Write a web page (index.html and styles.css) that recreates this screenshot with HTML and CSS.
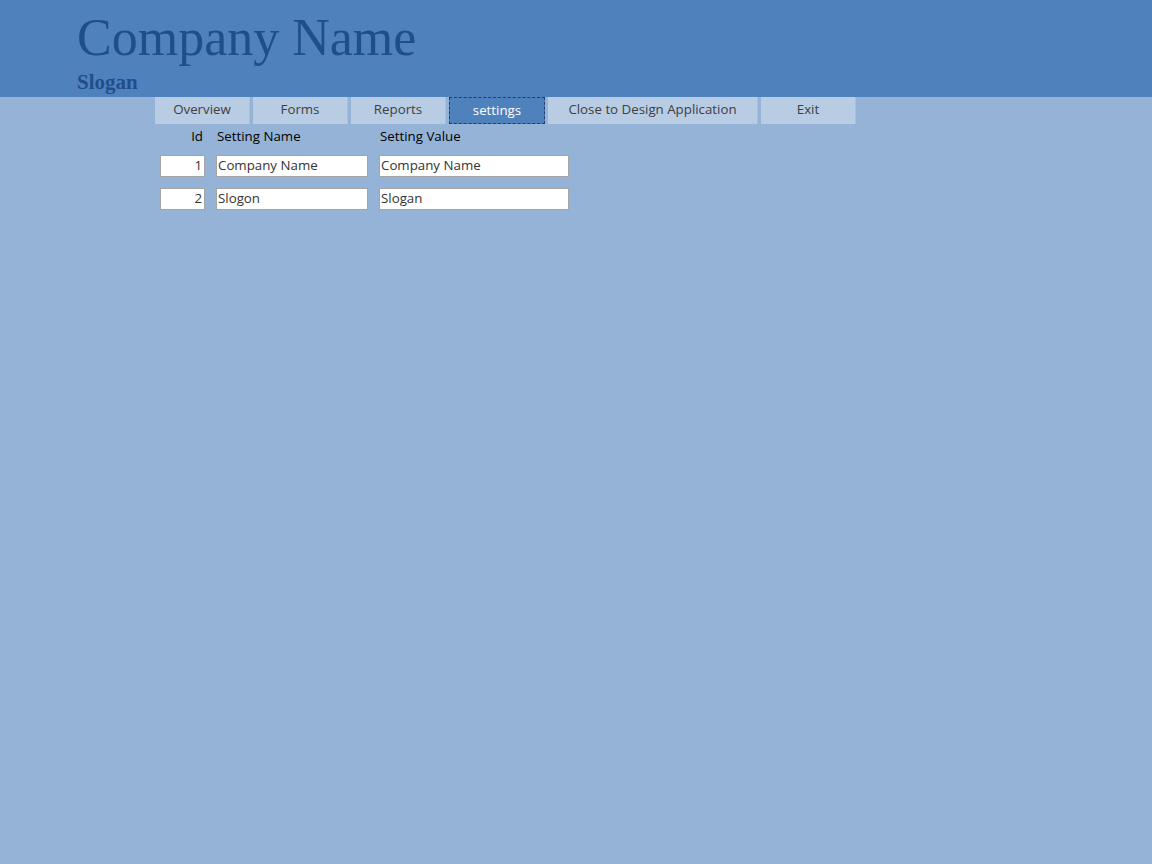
FILE: index.html
```html
<!DOCTYPE html>
<html>
<head>
<meta charset="utf-8">
<link rel="stylesheet" href="styles.css">
</head>
<body>
<header class="banner">
  <div class="title">Company Name</div>
  <div class="slogan">Slogan</div>
</header>
<nav class="tabs">
  <div class="tab w95">Overview</div>
  <div class="tab w95">Forms</div>
  <div class="tab w95">Reports</div>
  <div class="tab w96 active">settings</div>
  <div class="tab w210">Close to Design Application</div>
  <div class="tab w95">Exit</div>
</nav>
<main class="grid">
  <div class="lbl lbl-id">Id</div>
  <div class="lbl">Setting Name</div>
  <div class="lbl">Setting Value</div>

  <div class="box box-id">1</div>
  <div class="box">Company Name</div>
  <div class="box">Company Name</div>

  <div class="box box-id">2</div>
  <div class="box">Slogon</div>
  <div class="box">Slogan</div>
</main>
</body>
</html>
```
FILE: styles.css
```css
html, body {
  margin: 0;
  padding: 0;
  background: #95b3d7;
  height: 100%;
}
body {
  font-family: "Open Sans", "Liberation Sans", sans-serif;
}
.banner {
  background: #4f81bd;
  height: 97px;
  box-sizing: border-box;
  padding-left: 77px;
  padding-top: 6px;
}
.title {
  font-family: "Liberation Serif", "DejaVu Serif", serif;
  font-size: 52px;
  line-height: 64px;
  color: #1f4e8c;
}
.slogan {
  font-family: "Liberation Serif", "DejaVu Serif", serif;
  font-size: 21px;
  font-weight: bold;
  line-height: 22px;
  color: #1f4e8c;
  margin-top: 1px;
}
.tabs {
  display: flex;
  gap: 3px;
  margin-left: 155px;
}
.tab {
  height: 27px;
  box-sizing: border-box;
  background: #b8cce4;
  color: #404040;
  font-size: 13.3px;
  display: flex;
  align-items: center;
  justify-content: center;
  border-right: 1px solid #a9bfdc;
  padding-bottom: 4px;
}
.w95 { width: 95px; }
.w96 { width: 96px; }
.w210 { width: 210px; }
.tab.active {
  background: #4f81bd;
  color: #ffffff;
  border: 1px dashed #1f3f6a;
  padding-bottom: 2px;
}
.grid {
  display: grid;
  grid-template-columns: 45px 152px 190px;
  grid-template-rows: 16px 22px 22px;
  column-gap: 11px;
  row-gap: 11px;
  margin-left: 160px;
  margin-top: 4px;
}
.lbl {
  font-size: 13.3px;
  color: #000;
  line-height: 16px;
  padding-left: 1px;
}
.lbl-id {
  text-align: right;
  padding-right: 2px;
}
.box {
  background: #fff;
  border: 1px solid #a5a5a5;
  height: 22px;
  box-sizing: border-box;
  font-size: 13.3px;
  color: #333;
  line-height: 19px;
  padding: 0 2px 0 1px;
  white-space: nowrap;
  overflow: hidden;
}
.box-id {
  text-align: right;
}
```
